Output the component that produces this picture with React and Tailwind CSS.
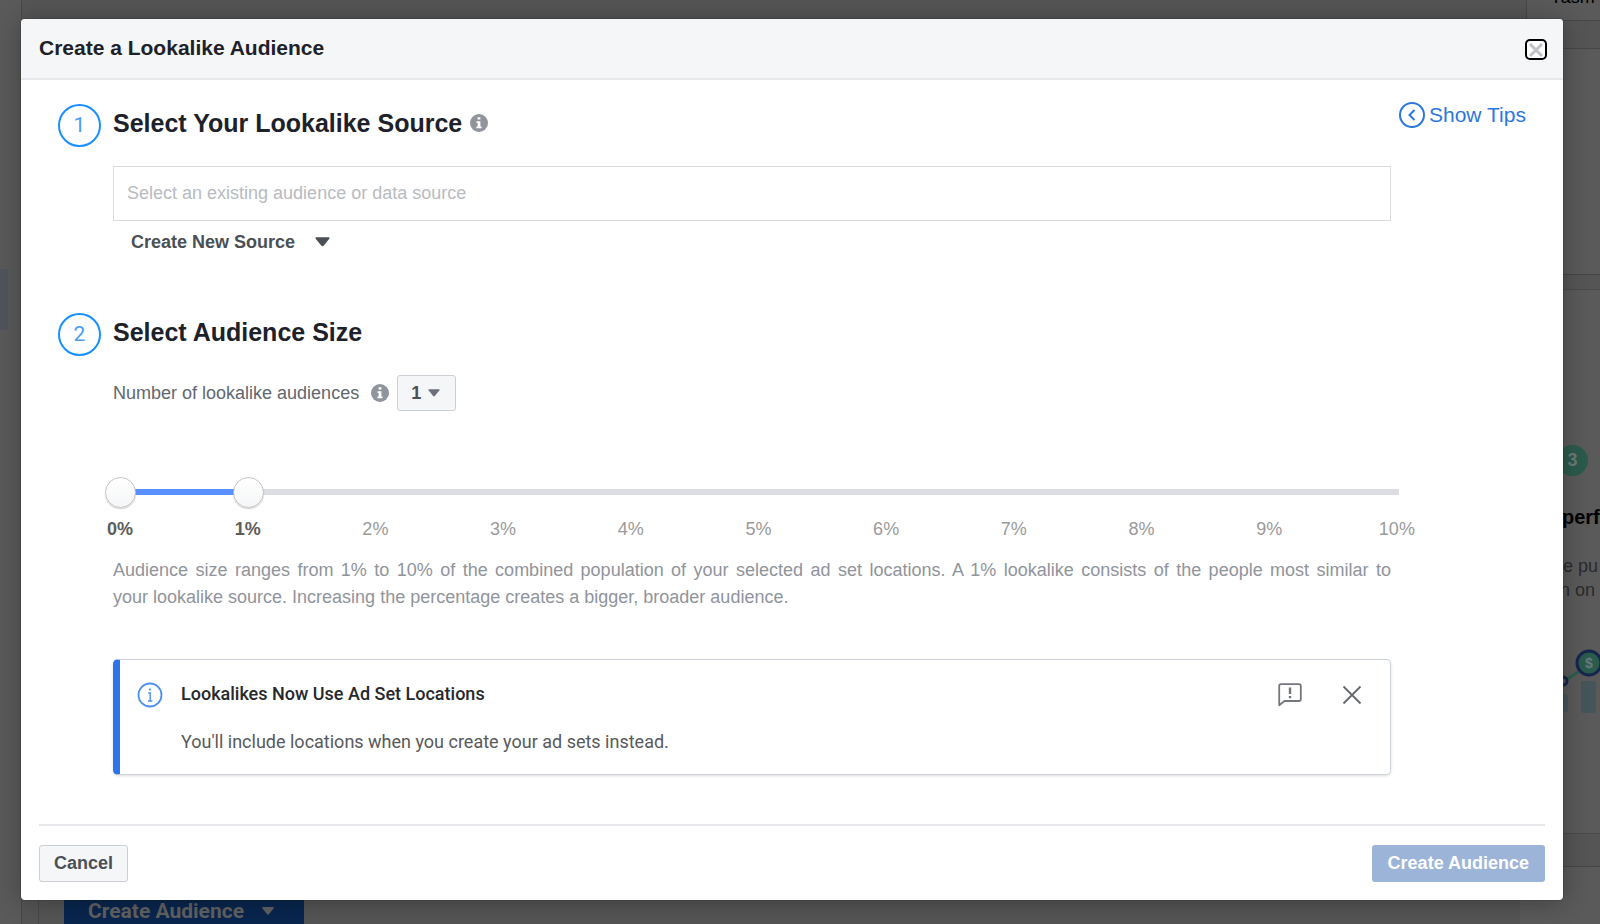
import { useState } from "react";

const TICKS = [0, 1, 2, 3, 4, 5, 6, 7, 8, 9, 10];

const Caret = ({ className }) => (
  <svg viewBox="0 0 16 10" className={className} fill="currentColor" aria-hidden="true">
    <path d="M1.5 0h13q1.5 0 .8 1.4L9.4 8.7q-1.4 1.6-2.8 0L.7 1.4Q0 0 1.5 0z" />
  </svg>
);

const InfoBadge = () => (
  <svg viewBox="0 0 18 18" className="h-[18px] w-[18px] shrink-0" aria-hidden="true">
    <circle cx="9" cy="9" r="9" fill="#90949c" />
    <path d="M7.6 3.2h2.8v2.4H7.6zM6.5 7.2h3.9v5.2h1.2v1.8H6.4v-1.8h1.3V9H6.5z" fill="#fff" />
  </svg>
);

const StepNumber = ({ children }) => (
  <span className="flex h-[43px] w-[43px] shrink-0 items-center justify-center rounded-full border-2 border-[#1890ff] font-['Roboto',sans-serif] text-[21px] leading-none text-[#4a9cf5]">
    {children}
  </span>
);

/* Page that sits behind the dialog, already dimmed */
const Backdrop = () => (
  <div className="absolute inset-0 overflow-hidden bg-[#555555]" aria-hidden="true">
    <div className="absolute inset-y-0 left-0 w-[22px] border-r border-[#484848] bg-[#5a5a5a]" />
    <div className="absolute left-0 top-[269px] h-[61px] w-2 rounded-r bg-[#50545c]" />
    <div className="absolute bottom-0 left-[38px] h-6 w-px bg-[#484848]" />

    <div className="absolute -top-10 right-0 flex h-[61px] w-[74px] items-end border border-r-0 border-[#474747] bg-[#5a5a5a] pb-[13px] pl-[23px] text-[18px] leading-5 text-black">
      Yasm
    </div>
    <div className="absolute right-0 top-12 h-[227px] w-20 border-y border-[#464646] bg-[#5a5a5a]" />
    <div className="absolute right-0 top-[289px] h-[545px] w-20 border-y border-[#4b4b4b] bg-[#5a5a5a]" />
    <div className="absolute bottom-0 right-0 h-[58px] w-20 border-t border-[#464646] bg-[#5a5a5a]" />

    <div className="absolute left-[1557px] top-[445px] flex h-[31px] w-[31px] items-center justify-center rounded-full bg-[#2a5b4d] text-[18px] font-bold text-[#6c7a76]">
      3
    </div>
    <p className="absolute left-[1562px] top-[505px] whitespace-nowrap text-[20px] font-bold leading-6 text-black">perf</p>
    <p className="absolute left-[1554px] top-[554px] whitespace-nowrap text-[18px] leading-6 text-[#2a2a2c]">
      ke pu
      <br />
      rn on
    </p>
    <svg className="absolute left-[1540px] top-[640px]" width="60" height="80" viewBox="0 0 60 80">
      <rect x="10" y="54" width="18" height="18" rx="2" fill="#46555a" />
      <rect x="41" y="41" width="15" height="32" rx="3" fill="#46555a" />
      <path d="M24 41L49 25" stroke="#2d5d50" strokeWidth="3" />
      <circle cx="23" cy="41" r="4" fill="#5a5a5a" stroke="#17264d" strokeWidth="3" />
      <circle cx="49" cy="23" r="12" fill="#2a5b4d" stroke="#17264d" strokeWidth="3" />
      <text x="49" y="28" textAnchor="middle" fontSize="14" fontWeight="700" fill="#6c7a76">$</text>
    </svg>

    <div className="absolute bottom-0 left-16 flex h-8 w-60 items-center bg-[#09264f] pl-6 pt-[6px] font-['Roboto',sans-serif] text-[21px] font-bold leading-none text-[#626262]">
      Create Audience
      <Caret className="ml-4 h-2 w-4" />
    </div>
  </div>
);

const Notice = () => (
  <section className="mt-12 flex items-start rounded-[5px] border border-l-[7px] border-[#cfd4dc] border-l-[#2d74e8] bg-white pb-5 pl-[17px] pr-[25px] pt-[22px] font-['Roboto',sans-serif] text-[18px] leading-6 shadow-[0_1px_3px_rgba(0,0,0,0.14)]">
    <svg viewBox="0 0 26 26" className="h-[26px] w-[26px] shrink-0" fill="none" stroke="#4d8ff0" aria-hidden="true">
      <circle cx="13" cy="13" r="11.5" strokeWidth="1.8" />
      <path d="M11.2 11h2v8M11 19h4.4" strokeWidth="1.4" />
      <circle cx="13" cy="7.5" r="1.1" fill="#4d8ff0" stroke="none" />
    </svg>
    <div className="ml-[18px] flex-1">
      <h3 className="font-medium text-[#26282c]">Lookalikes Now Use Ad Set Locations</h3>
      <p className="mt-6 text-[#58595c]">You'll include locations when you create your ad sets instead.</p>
    </div>
    <button type="button" aria-label="Give feedback" className="text-[#73767b]">
      <svg viewBox="0 0 26 26" className="h-[26px] w-[26px]" fill="none" stroke="currentColor" strokeWidth="1.8">
        <path d="M2.2 23V4q0-1.8 1.8-1.8h18Q23.8 2.2 23.8 4v13.2q0 1.8-1.8 1.8H7.5L2.2 23.2z" strokeLinejoin="round" />
        <path d="M13 5.5v6.6M13 14v2.2" strokeWidth="2.4" />
      </svg>
    </button>
    <button type="button" aria-label="Dismiss" className="ml-9 text-[#65686d]">
      <svg viewBox="0 0 26 26" className="h-[26px] w-[26px]" fill="none" stroke="currentColor" strokeWidth="1.8">
        <path d="M4.5 4.5l17 17M21.5 4.5l-17 17" />
      </svg>
    </button>
  </section>
);

const SizeSlider = ({ range, setRange }) => (
  <div className="-mx-2 mt-[66px]">
    <div className="relative h-8">
      <div className="absolute left-4 right-0 top-3 h-[6px] bg-[#dcdde3]">
        <div
          className="relative h-full bg-[#5890ff]"
          style={{ left: `${range[0] * 10}%`, width: `${(range[1] - range[0]) * 10}%` }}
        />
      </div>
      {range.map((value, i) => (
        <input
          key={i}
          type="range"
          min="0"
          max="10"
          value={value}
          aria-label={i === 0 ? "Smallest audience percent" : "Largest audience percent"}
          onChange={(e) => setRange(range.map((v, j) => (j === i ? Number(e.target.value) : v)))}
          className="pointer-events-none absolute left-0 top-0 h-[31px] w-[calc(100%+16px)] appearance-none bg-transparent [&::-webkit-slider-thumb]:pointer-events-auto [&::-webkit-slider-thumb]:h-[31px] [&::-webkit-slider-thumb]:w-[31px] [&::-webkit-slider-thumb]:appearance-none [&::-webkit-slider-thumb]:rounded-full [&::-webkit-slider-thumb]:border [&::-webkit-slider-thumb]:border-[#c5c6ca] [&::-webkit-slider-thumb]:bg-linear-to-b [&::-webkit-slider-thumb]:from-white [&::-webkit-slider-thumb]:to-[#f5f6f7] [&::-webkit-slider-thumb]:shadow-[0_1px_1px_rgba(0,0,0,0.2)]"
        />
      ))}
    </div>
    <div className="-ml-[23px] -mr-9 mt-2 flex justify-between leading-6">
      {TICKS.map((tick) => (
        <span
          key={tick}
          className={`w-[76px] text-center ${range.includes(tick) ? "font-bold text-[#5c5c5c]" : "text-[#9a9a9a]"}`}
        >
          {tick}%
        </span>
      ))}
    </div>
  </div>
);

const App = () => {
  const [range, setRange] = useState([0, 1]);

  return (
    <div className="relative min-h-screen overflow-hidden px-[21px] pb-6 pt-[19px] font-['Liberation_Sans',Arial,sans-serif] text-[18px]">
      <Backdrop />

      <div
        role="dialog"
        aria-labelledby="dialog-title"
        className="relative mr-4 overflow-hidden rounded-[4px] bg-white shadow-[0_2px_26px_rgba(0,0,0,0.3),0_0_0_1px_rgba(0,0,0,0.1)]"
      >
        <header className="flex h-[61px] items-center justify-between border-b-2 border-[#e6e8eb] bg-[#f5f6f8] pl-[18px] pr-4 pt-[2px]">
          <h1 id="dialog-title" className="pb-1 text-[21px] font-bold leading-6 text-[#1d2129]">
            Create a Lookalike Audience
          </h1>
          <button
            type="button"
            aria-label="Close"
            className="flex h-[21px] w-[22px] items-center justify-center rounded-[5px] border-2 border-black bg-white"
          >
            <svg viewBox="0 0 16 16" className="h-4 w-4" stroke="#bec2c9" strokeWidth="3" aria-hidden="true">
              <path d="M2 2l12 12M14 2L2 14" />
            </svg>
          </button>
        </header>

        <main className="flex items-start justify-between pl-[37px] pt-[22px]">
          <div className="min-w-0 flex-1">
            <section className="flex items-start">
              <div className="pt-[2px]">
                <StepNumber>1</StepNumber>
              </div>
              <div className="ml-3 flex-1">
                <div className="flex h-[42px] items-center gap-2">
                  <h2 className="text-[25px] font-bold leading-8 text-[#1d2129]">Select Your Lookalike Source</h2>
                  <InfoBadge />
                </div>
                <input
                  type="text"
                  aria-label="Lookalike source"
                  placeholder="Select an existing audience or data source"
                  className="mt-[22px] block h-[55px] w-full border border-[#dadbdd] bg-white px-[13px] text-[18px] outline-none placeholder:text-[#b8bbc0]"
                />
                <button type="button" className="ml-[18px] mt-[9px] flex items-center font-bold leading-6 text-[#4b4f56]">
                  Create New Source
                  <Caret className="ml-5 h-[10px] w-[15px]" />
                </button>
              </div>
            </section>

            <section className="mt-[59px] flex items-start">
              <StepNumber>2</StepNumber>
              <div className="ml-3 min-w-0 flex-1">
                <h2 className="text-[25px] font-bold leading-[38px] text-[#1d2129]">Select Audience Size</h2>
                <div className="mt-6 flex h-9 items-center">
                  <label htmlFor="audience-count" className="text-[#606770]">
                    Number of lookalike audiences
                  </label>
                  <span className="ml-3 mr-2">
                    <InfoBadge />
                  </span>
                  <span className="relative flex items-center text-[#4b4f56]">
                    <select
                      id="audience-count"
                      className="h-9 w-[59px] appearance-none rounded-[3px] border border-[#ccd0d5] bg-[#f5f6f7] pl-[13px] font-bold"
                    >
                      <option>1</option>
                      <option>2</option>
                      <option>3</option>
                    </select>
                    <Caret className="pointer-events-none absolute right-4 h-2 w-3 text-[#6b707a]" />
                  </span>
                </div>
                <SizeSlider range={range} setRange={setRange} />
                <p className="mt-4 leading-[27px] text-[#90949c]">
                  <span className="block [text-align-last:justify]">
                    Audience size ranges from 1% to 10% of the combined population of your selected ad set locations. A 1%
                    lookalike consists of the people most similar to
                  </span>{" "}
                  your lookalike source. Increasing the percentage creates a bigger, broader audience.
                </p>
                <Notice />
              </div>
            </section>
          </div>

          <aside className="w-[172px] shrink-0">
            <button type="button" className="ml-2 flex items-center gap-1 whitespace-nowrap text-[21px] leading-6 text-[#2b77e0]">
              <svg viewBox="0 0 26 26" className="h-[26px] w-[26px]" fill="none" stroke="currentColor" strokeWidth="2" aria-hidden="true">
                <circle cx="13" cy="13" r="12" />
                <path d="M15.5 8l-5 5 5 5" />
              </svg>
              Show Tips
            </button>
          </aside>
        </main>

        <footer className="mx-[18px] mt-[49px] flex items-start justify-between border-t-2 border-[#e6e8eb] pb-[18px] pt-[19px] font-bold">
          <button type="button" className="h-[37px] rounded-[3px] border border-[#ccd0d5] bg-[#f5f6f7] px-[14px] text-[#4b4f56]">
            Cancel
          </button>
          <button type="button" className="h-[37px] rounded-[3px] bg-[#9cb4d8] px-4 text-white">
            Create Audience
          </button>
        </footer>
      </div>
    </div>
  );
};

export default App;
